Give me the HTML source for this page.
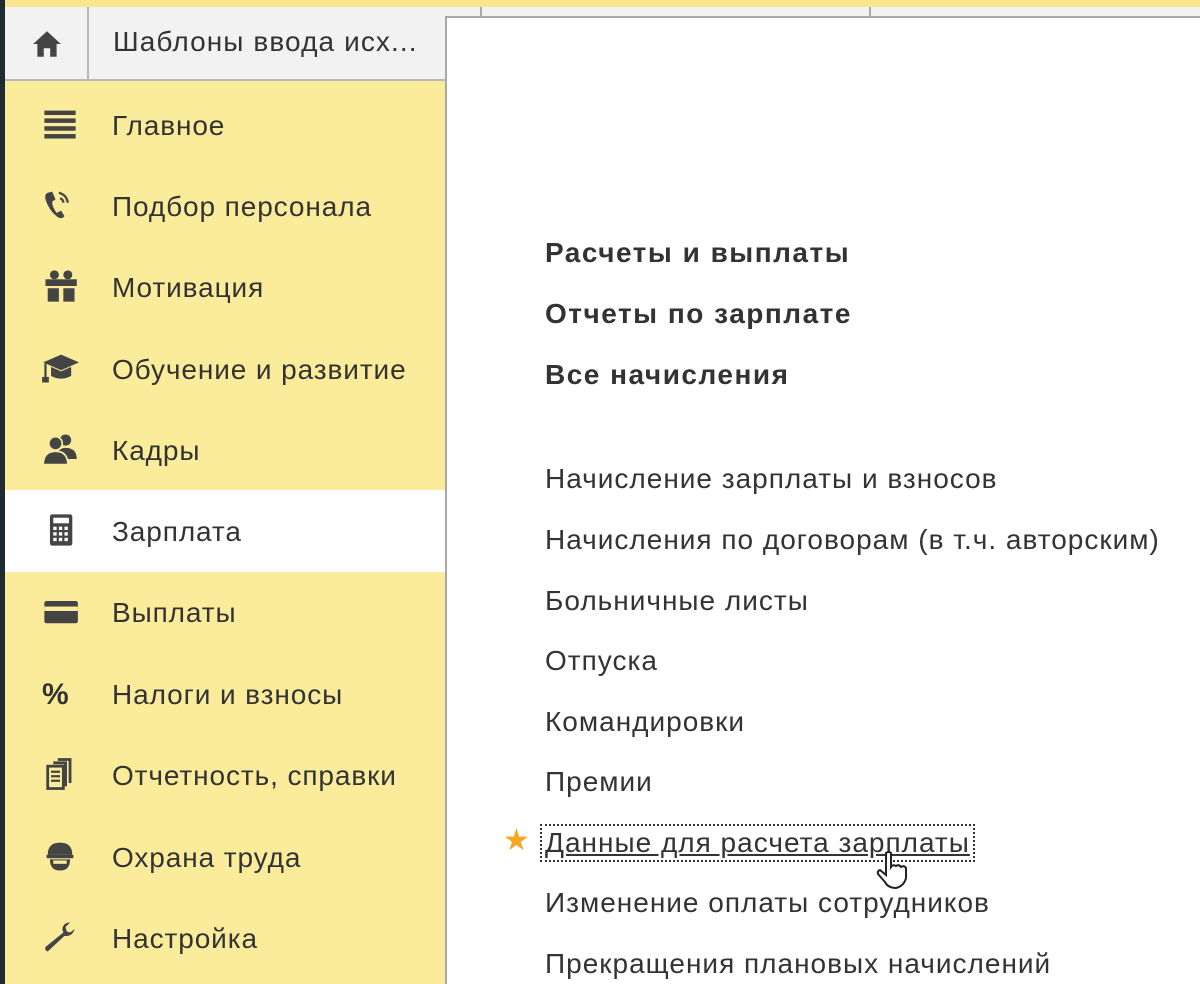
<!DOCTYPE html>
<html><head><meta charset="utf-8"><style>
*{margin:0;padding:0;box-sizing:border-box}
body{width:1200px;height:984px;overflow:hidden;position:relative;background:#fbec9b;font-family:"Liberation Sans",Arial,sans-serif;color:#333}
.desk{position:absolute;left:0;top:0;width:5px;height:984px;background:#1f2a33}
.topy{position:absolute;left:5px;top:0;width:1195px;height:7px;background:#f9e68f}
.tabs{position:absolute;left:5px;top:7px;width:1195px;height:74px;background:#f2f2f2;border-bottom:2px solid #b8b8b8}
.home{position:absolute;left:5px;top:7px;width:84px;height:74px;border-right:2px solid #b8b8b8}
.tabt{position:absolute;left:113px;top:26px;font-size:28px;letter-spacing:1.1px;color:#333}
.panel{position:absolute;left:445px;top:16px;width:755px;height:968px;background:#fff;border-left:2px solid #a8a8a8;border-top:2px solid #a8a8a8}
.sep{position:absolute;top:7px;width:2px;height:10px;background:#aaa}
.row{position:absolute;left:5px;width:440px;height:82px}
.row.sel{background:#fff}
.row span{position:absolute;left:107px;top:26px;font-size:28px;letter-spacing:0.9px;color:#333;white-space:nowrap}
.row svg{position:absolute;left:36px;top:23px;width:38px;height:34px}
.r{position:absolute;left:545px;font-size:28px;letter-spacing:1px;white-space:nowrap;color:#333}
.b{font-weight:bold;letter-spacing:1.5px}
</style></head><body>
<div class="desk"></div><div class="topy"></div>
<div class="tabs"></div>
<div class="home"><svg style="position:absolute;left:26px;top:22px" width="32" height="30" viewBox="0 0 30 28"><path d="M15 2 L2 14 H6 V26 H12 V18 H18 V26 H24 V14 H28 Z" fill="#444"/></svg></div>
<div class="tabt">Шаблоны ввода исх...</div>
<div class="sep" style="left:480px"></div><div class="sep" style="left:869px"></div>
<div class="panel"></div>

<div class="row" style="top:84px"><svg viewBox="0 0 34 30"><rect x="3" y="3" width="28" height="4" fill="#444"/><rect x="3" y="10" width="28" height="4" fill="#444"/><rect x="3" y="17" width="28" height="4" fill="#444"/><rect x="3" y="24" width="28" height="4" fill="#444"/></svg><span>Главное</span></div>
<div class="row" style="top:165px"><svg viewBox="0 0 34 30"><path d="M6 4 Q3 5 4 10 Q7 20 15 26 Q19 28 21 25 L18 20 L14 22 Q10 17 10 12 L13 10 L10 3 Z" fill="#444"/><path d="M16 4 Q23 6 24 13 M17 9 Q20 10 20 13" stroke="#444" stroke-width="2" fill="none"/></svg><span>Подбор персонала</span></div>
<div class="row" style="top:246px"><svg viewBox="0 0 34 30"><rect x="4" y="9" width="28" height="6" fill="#444"/><rect x="6" y="17" width="10" height="12" fill="#444"/><rect x="20" y="17" width="10" height="12" fill="#444"/><circle cx="12" cy="5" r="4" fill="#444"/><circle cx="24" cy="5" r="4" fill="#444"/></svg><span>Мотивация</span></div>
<div class="row" style="top:328px"><svg viewBox="0 0 34 30"><path d="M2 10 L18 3 L34 10 L18 17 Z" fill="#444"/><path d="M9 14 V22 Q18 27 27 22 V14 L18 18 Z" fill="#444"/><rect x="3" y="11" width="2" height="14" fill="#444"/><rect x="1" y="23" width="6" height="5" fill="#444"/></svg><span>Обучение и развитие</span></div>
<div class="row" style="top:409px"><svg viewBox="0 0 34 30"><circle cx="22" cy="7" r="5" fill="#444"/><path d="M14 24 Q14 14 22 14 Q32 14 32 24 Z" fill="#444"/><circle cx="13" cy="10" r="6" fill="#444" stroke="#fbec9b" stroke-width="1.5"/><path d="M2 29 Q2 17 13 17 Q24 17 24 29 Z" fill="#444" stroke="#fbec9b" stroke-width="1.5"/></svg><span>Кадры</span></div>
<div class="row sel" style="top:490px"><svg viewBox="0 0 34 30"><rect x="8" y="1" width="20" height="28" rx="2" fill="#444"/><rect x="11" y="4" width="14" height="5" fill="#fff"/><g fill="#fff"><rect x="11" y="12" width="3" height="3"/><rect x="16" y="12" width="3" height="3"/><rect x="21" y="12" width="3" height="3"/><rect x="11" y="17" width="3" height="3"/><rect x="16" y="17" width="3" height="3"/><rect x="21" y="17" width="3" height="3"/><rect x="11" y="22" width="3" height="3"/><rect x="16" y="22" width="3" height="3"/><rect x="21" y="22" width="3" height="3"/></g></svg><span>Зарплата</span></div>
<div class="row" style="top:571px"><svg viewBox="0 0 34 30"><rect x="3" y="6" width="30" height="20" rx="2" fill="#444"/><rect x="3" y="11" width="30" height="4" fill="#fbec9b"/></svg><span>Выплаты</span></div>
<div class="row" style="top:653px"><span style="left:37px;font-weight:bold;font-size:30px;top:25px">%</span><span>Налоги и взносы</span></div>
<div class="row" style="top:734px"><svg viewBox="0 0 34 30"><rect x="6" y="8" width="14" height="20" fill="none" stroke="#444" stroke-width="2.5"/><path d="M9 13h8M9 17h8M9 21h8" stroke="#444" stroke-width="2"/><path d="M22 26V5H11M26 23V2H15" stroke="#444" stroke-width="2.5" fill="none"/></svg><span>Отчетность, справки</span></div>
<div class="row" style="top:816px"><svg viewBox="0 0 34 30"><path d="M6 14 Q6 3 17 3 Q28 3 28 14 Z" fill="#444"/><rect x="5" y="14" width="24" height="3" fill="#444"/><path d="M8 18 Q8 28 17 28 Q26 28 26 18 Z" fill="#444"/><rect x="11" y="19" width="12" height="3" fill="#fbec9b"/></svg><span>Охрана труда</span></div>
<div class="row" style="top:897px"><svg viewBox="0 0 34 30"><path d="M26 2 Q20 2 19 8 L20 11 L4 24 Q3 27 6 28 L21 14 Q28 15 30 8 L26 11 L23 10 L22 6 Z" fill="#444"/></svg><span>Настройка</span></div>

<div class="r b" style="top:237px">Расчеты и выплаты</div>
<div class="r b" style="top:298px">Отчеты по зарплате</div>
<div class="r b" style="top:359px">Все начисления</div>
<div class="r" style="top:463px">Начисление зарплаты и взносов</div>
<div class="r" style="top:524px">Начисления по договорам (в т.ч. авторским)</div>
<div class="r" style="top:585px">Больничные листы</div>
<div class="r" style="top:645px">Отпуска</div>
<div class="r" style="top:706px">Командировки</div>
<div class="r" style="top:766px">Премии</div>
<div style="position:absolute;left:503px;top:823px;color:#f5a623;font-size:30px">★</div>
<div class="r" style="top:827px;text-decoration:underline;outline:2px dotted #333;outline-offset:1px;left:543px;padding:0 2px">Данные для расчета зарплаты</div>
<div class="r" style="top:887px">Изменение оплаты сотрудников</div>
<div class="r" style="top:948px">Прекращения плановых начислений</div>
<svg style="position:absolute;left:876px;top:850px" width="36" height="40" viewBox="0 0 36 40"><path d="M10 3 Q13 1 15 3 V17 Q17 14 20 16 Q23 14 25 17 Q28 15 30 18 V28 Q28 36 20 38 Q12 38 9 32 L2 24 Q1 21 4 20 L10 25 Z" fill="#fff" stroke="#222" stroke-width="2"/></svg>
</body></html>
